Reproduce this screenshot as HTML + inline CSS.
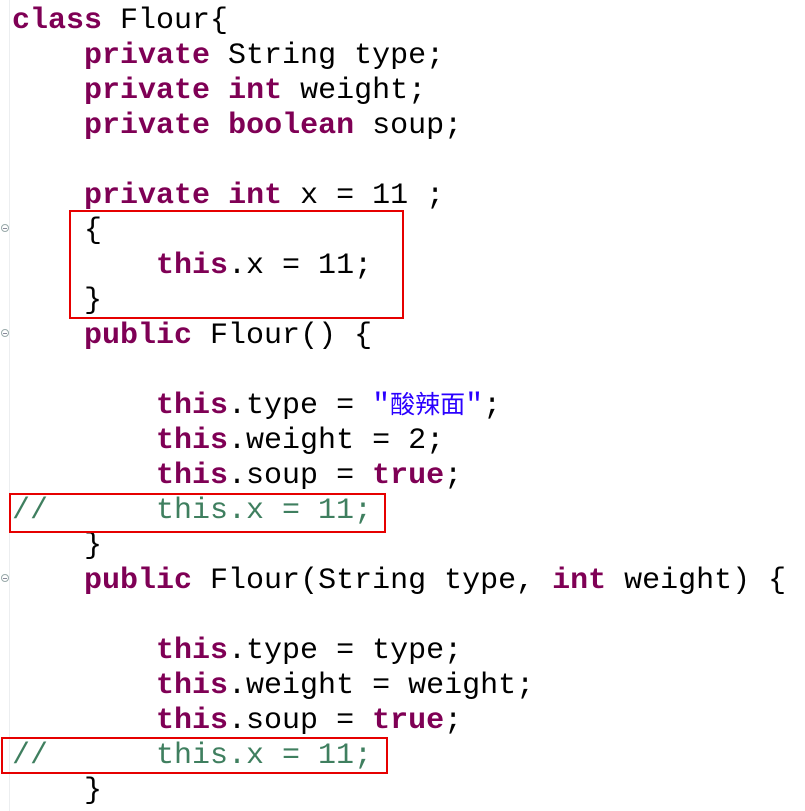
<!DOCTYPE html>
<html><head><meta charset="utf-8"><style>
body{margin:0;width:805px;height:811px;background:#fff;overflow:hidden;position:relative}
.gut{position:absolute;left:9px;top:0;width:1px;height:811px;background:#eceef0}
pre{margin:0;position:absolute;left:12px;top:4px;font-family:"Liberation Mono","Courier New",monospace;font-size:30px;line-height:35px;color:#000}
b{color:#7f0055}
.s{color:#2a00ff}
.c{color:#3f7f5f}
.cjk{font-family:"Noto Sans CJK SC",sans-serif;font-size:25px;line-height:10px;display:inline-block;vertical-align:baseline}
.box{position:absolute;border:2px solid #e60000;box-sizing:border-box}
.f{position:absolute;left:1px;width:8px;height:8px;border:1px solid #9aa;border-radius:50%;box-sizing:border-box}
.f:after{content:"";position:absolute;left:1px;top:2.5px;width:4px;height:1px;background:#889}
</style></head><body>
<div class="gut"></div>
<div class="f" style="top:224px"></div>
<div class="f" style="top:329px"></div>
<div class="f" style="top:574px"></div>
<pre><b>class</b> Flour{
    <b>private</b> String type;
    <b>private</b> <b>int</b> weight;
    <b>private</b> <b>boolean</b> soup;

    <b>private</b> <b>int</b> x = 11 ;
    {
        <b>this</b>.x = 11;
    }
    <b>public</b> Flour() {

        <b>this</b>.type = <span class="s">"<span class="cjk">酸辣面</span>"</span>;
        <b>this</b>.weight = 2;
        <b>this</b>.soup = <b>true</b>;
<span class="c">//      this.x = 11;</span>
    }
    <b>public</b> Flour(String type, <b>int</b> weight) {

        <b>this</b>.type = type;
        <b>this</b>.weight = weight;
        <b>this</b>.soup = <b>true</b>;
<span class="c">//      this.x = 11;</span>
    }</pre>
<div class="box" style="left:69px;top:210px;width:335px;height:109px"></div>
<div class="box" style="left:9px;top:493px;width:377px;height:40px"></div>
<div class="box" style="left:1px;top:737px;width:387px;height:37px"></div>
</body></html>
